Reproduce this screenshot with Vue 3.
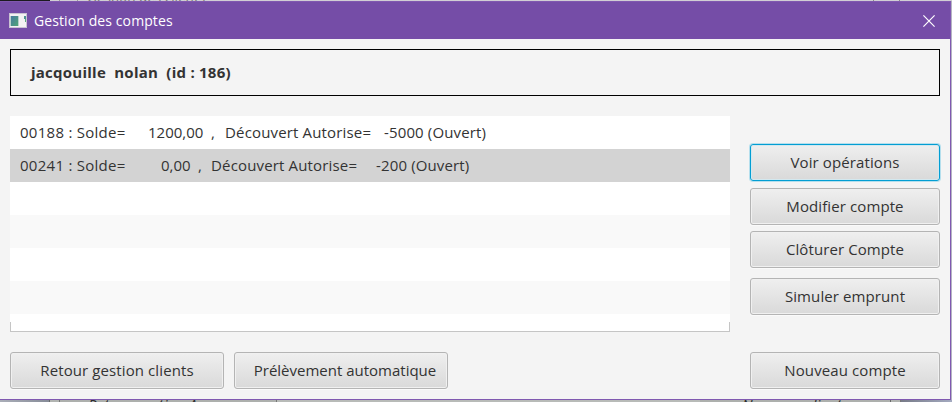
<script setup>
const accounts = [
  { id: '00188', balance: '1200,00', overdraft: '-5000', state: '(Ouvert)', kind: 'first', selected: false },
  { id: '00241', balance: '0,00', overdraft: '-200', state: '(Ouvert)', kind: 'second', selected: true },
]
const actions = [
  { label: 'Voir opérations', cls: 'focused' },
  { label: 'Modifier compte', cls: 'modify' },
  { label: 'Clôturer Compte', cls: 'close-account' },
  { label: 'Simuler emprunt', cls: 'simulate' },
]
</script>

<template>
  <div class="screen">
    <div class="behind behind-top"><i class="dark"></i><i class="a"></i><i class="b"></i><span class="ghost">Gestion des clients</span><i class="c"></i><i class="d"></i></div>
    <main class="window">
      <header class="titlebar">
        <svg class="app-icon" width="18" height="15" viewBox="0 0 18 15">
          <defs>
            <linearGradient id="pane" x1="0" y1="0" x2="1" y2="1">
              <stop offset="0" stop-color="#467ba0" /><stop offset="1" stop-color="#50a477" />
            </linearGradient>
          </defs>
          <rect width="18" height="15" fill="#c9c2d2" />
          <rect x="1" y="1" width="16" height="13" fill="#f3f1f3" />
          <rect x="1" y="3" width="9" height="10" fill="#b9d0cc" />
          <rect x="2" y="3" width="7" height="10" fill="url(#pane)" />
          <rect x="15" y="3" width="2" height="3" fill="#4f8f92" />
          <rect x="16" y="6" width="1" height="3" fill="#5ca77f" />
        </svg>
        <span class="title">Gestion des comptes</span>
        <svg class="close" width="12" height="12" viewBox="0 0 12 12"><path d="M.4.4 11.6 11.6M11.6.4.4 11.6" stroke="#fff" stroke-width="1.2" /></svg>
      </header>
      <div class="content">
        <section class="client"><span>jacqouille&nbsp; nolan&nbsp; (id : 186)</span></section>
        <div class="middle">
          <div class="list">
            <div v-for="a in accounts" :key="a.id" class="row" :class="[a.kind, { selected: a.selected }]">
              <span class="id">{{ a.id }} : Solde=</span><span class="balance">{{ a.balance }}</span><span class="comma">,</span><span class="label">Découvert Autorise=</span><span class="over">{{ a.overdraft }} {{ a.state }}</span>
            </div>
            <div class="row"></div><div class="row alt"></div><div class="row"></div><div class="row alt"></div>
            <div class="tail"></div>
          </div>
          <nav class="actions">
            <button v-for="b in actions" :key="b.label" :class="b.cls"><span>{{ b.label }}</span></button>
          </nav>
        </div>
        <footer class="bottom">
          <button class="back"><span>Retour gestion clients</span></button>
          <button class="debit"><span>Prélèvement automatique</span></button>
          <button class="new"><span>Nouveau compte</span></button>
        </footer>
      </div>
    </main>
    <div class="behind behind-bottom"><i class="left"></i><i class="gap"></i><i class="field"><span class="ghost g1">Retour gestion Agence</span></i><i class="mid"></i><i class="field2"><span class="ghost g2">Nouveau client</span></i><i class="gap"></i><i class="right"></i></div>
  </div>
</template>

<style>
body { margin: 0; overflow: hidden; }
</style>
<style scoped>
* { box-sizing: border-box; }
.screen { width: 952px; height: 402px; overflow: hidden; background: #b5b4c2; font-family: "Open Sans", "Noto Sans", sans-serif; font-size: 15px; color: #333; }
.behind { display: flex; overflow: hidden; position: relative; }
.behind i { display: block; height: 100%; flex: none; }
.behind-top { height: 1px; background: #d1cfd4; }
.behind-top .dark { width: 50px; background: #1b1a20; }
.behind-top .a { width: 10px; border-right: 1px solid #999; }
.behind-top .b { width: 18px; border-right: 1px solid #999; }
.ghost { position: absolute; white-space: pre; line-height: 16px; font-size: 15px; color: #29292c; }
.behind-top .ghost { left: 87px; top: -11px; font-size: 13.5px; color: #777; }
.behind-top .c { width: 796px; border-right: 1px solid #888; }
.behind-top .d { width: 26px; border-right: 1px solid #888; }
.window { width: 951px; height: 399px; border-right: 1px solid #8059b0; border-bottom: 1px solid #8059b0; background: #f4f4f4; }
.titlebar { display: flex; align-items: center; height: 38px; padding: 0 15px 0 10px; background: #754da7; border-top: 1px solid #8058b0; color: #fff; }
.app-icon { margin-left: -1px; }
.title { margin-left: 7px; font-size: 14px; letter-spacing: .1px; white-space: nowrap; }
.close { margin-left: auto; }
.content { padding: 10px 10px 0; }
.client { display: flex; align-items: center; height: 47px; border: 1px solid #000; padding: 0 0 2px 20px; font-weight: 700; letter-spacing: .24px; white-space: nowrap; }
.middle { display: flex; justify-content: space-between; margin-top: 20px; height: 216px; }
.list { width: 720px; background: #fff; }
.row { display: flex; align-items: center; height: 33px; padding: 0 0 2px 10px; white-space: nowrap; }
.row.selected { background: #d3d3d3; }
.row.alt { background: #f9f9f9; }
.tail { height: 10px; margin-top: 8px; border: 1px solid #c5c5c5; border-top: 0; }
.id { width: 128px; letter-spacing: .27px; }
.balance { width: 63px; }
.comma { width: 14px; }
.label { width: 159px; letter-spacing: .16px; }
.over { letter-spacing: .14px; }
.second .id { width: 141px; }
.second .balance { width: 37px; }
.second .comma { width: 13px; }
.second .label { width: 165px; }
.actions { width: 190px; padding-top: 28px; }
button { display: flex; align-items: center; justify-content: center; width: 190px; height: 37px; padding: 0 0 2px; border: 1px solid #b4b4b4; border-radius: 3px; background: linear-gradient(#efefef, #d9d9d9); box-shadow: inset 0 0 0 1px #f0f0f0, 0 1px 0 #fafafa; font: inherit; letter-spacing: .1px; color: #333; white-space: nowrap; }
.focused { border-color: #039ed3; box-shadow: inset 0 0 0 1px #d3e8ef, 0 0 0 1px #b5dfed; }
.modify { margin-top: 7px; }
.close-account { margin-top: 6px; }
.simulate { margin-top: 10px; }
.bottom { display: flex; gap: 10px; margin-top: 20px; }
.back, .debit { width: 214px; }
.debit { padding-left: 8px; letter-spacing: 0; }
.new { margin-left: auto; }
.behind-bottom { height: 2px; }
.behind-bottom .left { width: 49px; background: linear-gradient(90deg, #aaaeb8, #878c98); }
.behind-bottom .gap { width: 11px; border-left: 1px solid #686969; border-right: 1px solid #777; background: #b1b4b1; }
.behind-bottom .field { width: 217px; background: #adb0ad; border-right: 1px solid #777; }
.behind-bottom .mid { width: 423px; background: #b8bbb8; }
.behind-bottom .field2 { width: 190px; background: #adb0ad; }
.behind-bottom .right { flex: 1; background: linear-gradient(90deg, #777b88, #a4aac0); }
.g1 { left: 88px; top: -4px; letter-spacing: .1px; }
.g2 { left: 742px; top: -4px; letter-spacing: .1px; }
</style>
